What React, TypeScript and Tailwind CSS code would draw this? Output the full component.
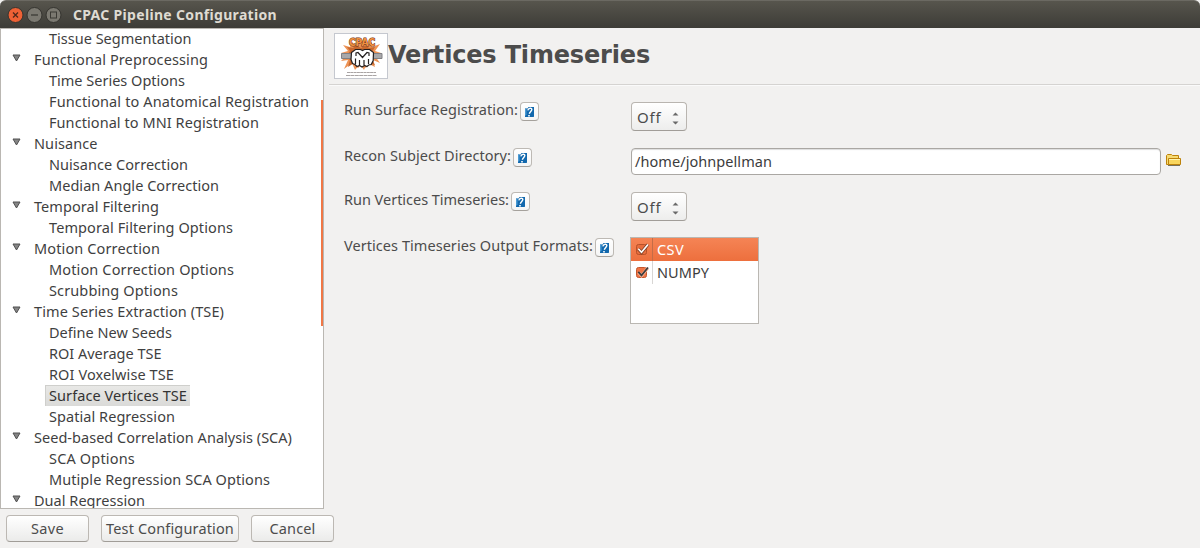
import { useLayoutEffect, useRef } from "react";

/* Text run whose tracking is adjusted so that it fills a given width. */
function Fit({ w, children }: { w: number; children: string }) {
  const ref = useRef<HTMLSpanElement>(null);
  useLayoutEffect(() => {
    const el = ref.current;
    if (!el) return;
    el.style.letterSpacing = "0px";
    const natural = el.getBoundingClientRect().width;
    el.style.letterSpacing = `${(w - natural) / children.length}px`;
  }, [w, children]);
  return (
    <span ref={ref} className="inline-block whitespace-pre">
      {children}
    </span>
  );
}

type Row = { label: string; w: number; group?: boolean; selected?: boolean };

const rows: Row[] = [
  { label: "Tissue Segmentation", w: 142.5 },
  { label: "Functional Preprocessing", w: 174, group: true },
  { label: "Time Series Options", w: 136 },
  { label: "Functional to Anatomical Registration", w: 260 },
  { label: "Functional to MNI Registration", w: 210 },
  { label: "Nuisance", w: 63.5, group: true },
  { label: "Nuisance Correction", w: 139 },
  { label: "Median Angle Correction", w: 170 },
  { label: "Temporal Filtering", w: 125, group: true },
  { label: "Temporal Filtering Options", w: 184 },
  { label: "Motion Correction", w: 126, group: true },
  { label: "Motion Correction Options", w: 185 },
  { label: "Scrubbing Options", w: 129 },
  { label: "Time Series Extraction (TSE)", w: 190, group: true },
  { label: "Define New Seeds", w: 123 },
  { label: "ROI Average TSE", w: 112.5 },
  { label: "ROI Voxelwise TSE", w: 125 },
  { label: "Surface Vertices TSE", w: 138, selected: true },
  { label: "Spatial Regression", w: 126 },
  { label: "Seed-based Correlation Analysis (SCA)", w: 258, group: true },
  { label: "SCA Options", w: 86 },
  { label: "Mutiple Regression SCA Options", w: 221 },
  { label: "Dual Regression", w: 111, group: true },
];

function TreeRow({ row }: { row: Row }) {
  if (row.group) {
    return (
      <div className="flex h-[21px] shrink-0 items-center pl-[11px]">
        <svg width="9" height="8" viewBox="0 0 9 8" className="mr-[13px] mb-[3px] shrink-0">
          <path d="M1 1h7L4.500 7z" fill="#858585" stroke="#505050" />
        </svg>
        <Fit w={row.w}>{row.label}</Fit>
      </div>
    );
  }
  return (
    <div className="flex h-[21px] shrink-0 pl-[44px]">
      <div
        className={
          row.selected
            ? "flex h-[21px] w-[145px] items-center border-t border-l border-[#cfcfcc] bg-linear-to-b from-[#e8e8e6] to-[#dadad8] pl-[3px] text-[#333]"
            : "flex h-[21px] items-center pl-1"
        }
      >
        <Fit w={row.w}>{row.label}</Fit>
      </div>
    </div>
  );
}

function Help() {
  return (
    <button className="flex h-[19px] w-[19px] shrink-0 items-center justify-center rounded-[4px] border border-[#bdb9b4] border-b-[#a5a19c] bg-linear-to-b from-white to-[#f5f5f5]">
      <svg width="11" height="12" viewBox="0 0 11 12">
        <path d="M1 2.500h2.500L4.500 1H10v9.500l-.5 .5H1z" fill="#1268ad" />
        <path d="M1 2.500h1.500v6L1 10z" fill="#4a9ad3" />
        <path d="M3.800 4.400C4.200 2 8.200 1.400 7.800 3.700 7.500 5.300 6 5.500 5.300 7.800" fill="none" stroke="#fff" strokeWidth="1.400" />
        <path d="M4.200 8.900h1.600v1.500H4.200z" fill="#fff" />
      </svg>
    </button>
  );
}

function Label({ text, w }: { text: string; w: number }) {
  return (
    <div className="-mt-px flex w-[286px] shrink-0 items-start">
      <div className="mr-[2px] leading-[18px]">
        <Fit w={w}>{text}</Fit>
      </div>
      <div className="pt-[2px]">
        <Help />
      </div>
    </div>
  );
}

function Choice() {
  return (
    <button className="mt-px ml-px flex h-[29px] w-[56px] items-center rounded-[4px] border border-[#b9b5b0] border-b-[#a19d98] bg-linear-to-b from-white to-[#ededec] pl-[5px] text-[15px] shadow-[inset_0_1px_#fff]">
      <div className="pt-px">
        <Fit w={24.5}>Off</Fit>
      </div>
      <svg width="7" height="13" viewBox="0 0 7 13" className="mt-[3px] ml-[10.5px]">
        <path d="M.5 3.500L3.500 .5 6.500 3.500zM.5 9.500L3.500 12.500 6.500 9.500z" fill="#696969" />
      </svg>
    </button>
  );
}

function Check() {
  return (
    <svg width="15" height="14" viewBox="0 0 15 14" className="shrink-0">
      <rect x="1.500" y="1.500" width="10" height="10" rx="2" fill="#ee7445" stroke="#c4562b" />
      <path d="M3.500 6.500l3 3.200L12.800 2" fill="none" stroke="#f7b79c" strokeWidth="3" />
      <path d="M3.300 5.800l3.200 3.500L13 1.500" fill="none" stroke="#3c3c3c" strokeWidth="1.800" />
    </svg>
  );
}

function CheckSelected() {
  return (
    <svg width="15" height="14" viewBox="0 0 15 14" className="shrink-0">
      <rect x="1.500" y="1.500" width="10" height="10" rx="2" fill="#e76c3c" stroke="#b85128" />
      <path d="M3.300 5.800l3.200 3.500L13 1.500" fill="none" stroke="#7e3e26" strokeWidth="3.200" />
      <path d="M3.300 5.800l3.200 3.500L13 1.500" fill="none" stroke="#fff" strokeWidth="1.700" />
    </svg>
  );
}

function Logo() {
  return (
    <div className="h-[46px] w-[54px] shrink-0 border border-[#c5c8cf] bg-white">
      <svg width="52" height="44" viewBox="0 0 52 44">
        <path
          d="M13 17L8 11l7 2 2-5 5 4 5-6 4 6 6-4 0 5 8-3-5 7 6 2-6 3 5 7-7-3 2 7-8-4-3 7-4-6-5 6-3-7-8 6 4-9-7 1 5-5-5-3z"
          fill="#ed9355"
        />
        <path d="M15 17l-3-4 6 1 3-3 5 3 5-3 3 3 6-1-3 5 4 4-4 3 3 6-7-2-2 5-4-5-4 5-4-5-6 4 2-7-4-3z" fill="#c8672d" />
        <path d="M6.500 19.500h12v5h-12zM36 19.500h11v5H36z" fill="#a8a8aa" stroke="#808084" />
        <path
          d="M16.500 18.500l4-3h5l2 1 2-1h5l4 3-.3 8-2 4-2.500 .5-1.700 1.500-2.500-1-2.500 1.500-2.500-1.500-2.500 1-2-2-2.500-1-1.500-4z"
          fill="#fff"
          stroke="#252020"
          strokeWidth="1.200"
        />
        <path d="M20.500 30v-5.500M24.500 31v-5M29 31v-5M33.500 30v-5M21 22v-3l2-.5 4.500 5 4.500-5 2 .5v3" fill="none" stroke="#252020" strokeWidth="1.200" />
        <text
          x="14"
          y="12"
          textLength="26"
          lengthAdjust="spacingAndGlyphs"
          fontSize="11"
          fontWeight="bold"
          fontFamily="DejaVu Sans"
          fill="#f0913f"
          stroke="#6d331b"
          strokeWidth="1.200"
          paintOrder="stroke"
        >
          CPAC
        </text>
        <path d="M12 38.500h29" stroke="#a9a4a4" strokeWidth="1" strokeDasharray="3 .3" />
        <path d="M11 41.500h31" stroke="#a9a4a4" strokeWidth="1" strokeDasharray="4 .4" />
      </svg>
    </div>
  );
}

const button =
  "flex h-[27px] items-center justify-center rounded-[4px] border border-[#bcb8b3] border-b-[#a19d98] bg-linear-to-b from-white to-[#ebebea] shadow-[inset_0_1px_#fff]";

export default function App() {
  return (
    <div className="flex h-[548px] w-[1200px] flex-col overflow-hidden bg-[#f2f1f0] font-['Noto_Sans',sans-serif] text-[14.5px] text-[#4c4c4c]">
      <header className="flex h-7 shrink-0 items-center rounded-t-[6px] border-t border-[#6b6962] bg-linear-to-b from-[#57554d] to-[#3d3c37] pl-[7px]">
        <svg width="56" height="18" viewBox="0 0 56 18" className="mr-[10px] shrink-0">
          <circle cx="8.500" cy="9" r="7.500" fill="#ee6135" stroke="#35342f" />
          <path d="M6 6.500l5 5M11 6.500l-5 5" stroke="#4f281b" strokeWidth="1.300" />
          <circle cx="27.500" cy="9" r="7.500" fill="#7b7971" stroke="#35342f" />
          <path d="M24 9h7" stroke="#3b3a35" strokeWidth="1.300" />
          <circle cx="46.500" cy="9" r="7.500" fill="#7b7971" stroke="#35342f" />
          <rect x="43.500" y="6" width="6" height="6" fill="none" stroke="#3b3a35" />
        </svg>
        <div className="text-[14px] font-bold text-[#dfdbd2]">
          <Fit w={204}>CPAC Pipeline Configuration</Fit>
        </div>
      </header>
      <div className="flex h-[481px] shrink-0">
        <nav className="relative h-[481px] w-[324px] shrink-0 overflow-hidden border border-[#bab7b2] bg-white">
          <div className="-mt-px flex flex-col text-[#3f3f3f]">
            {rows.map((r) => (
              <TreeRow key={r.label} row={r} />
            ))}
          </div>
          <div className="absolute top-[71px] -right-px h-[226px] w-[3px] bg-[#f07746]" />
        </nav>
        <main className="flex min-w-0 flex-1 flex-col pl-[5px]">
          <div className="flex h-[57px] shrink-0 items-start border-b border-[#d5d3d1] pt-[5px] pl-[5px] shadow-[0_1px_#fafafa]">
            <Logo />
            <h1 className="font-['DejaVu_Sans',sans-serif] text-[24px] leading-[45px] font-bold">
              <Fit w={262}>Vertices Timeseries</Fit>
            </h1>
          </div>
          <div className="flex flex-col pt-4 pl-[15px]">
            <div className="flex h-[46px] items-start">
              <Label text="Run Surface Registration:" w={174} />
              <Choice />
            </div>
            <div className="flex h-11 items-start">
              <Label text="Recon Subject Directory:" w={167} />
              <div className="mt-px ml-px flex h-[27px] w-[530px] items-center rounded-[4px] border border-[#aaa7a3] bg-white pl-[3px] text-[#3c3c3c] shadow-[inset_0_1px_1px_#ddd]">
                <Fit w={137}>/home/johnpellman</Fit>
              </div>
              <svg width="16" height="14" viewBox="0 0 16 14" className="mt-[6px] ml-[4px]">
                <path d="M1.500 11.500v-9l1-1h4l1 1h6v9z" fill="#f6da72" stroke="#bd820b" />
                <path d="M3.500 5.500h12v6h-12z" fill="#f9d65d" stroke="#bd820b" />
                <path d="M4 6.500h11" stroke="#fff4ae" />
                <path d="M3 12.500h12" stroke="#777158" />
              </svg>
            </div>
            <div className="flex h-[46px] items-start">
              <Label text="Run Vertices Timeseries:" w={165} />
              <Choice />
            </div>
            <div className="flex items-start">
              <Label text="Vertices Timeseries Output Formats:" w={249} />
              <div className="flex h-[87px] w-[129px] flex-col border border-[#bab7b2] bg-white">
                <div className="flex h-[23px] items-center bg-linear-to-b from-[#f58455] to-[#ed6f3d] pl-1 text-white">
                  <CheckSelected />
                  <div className="mr-1 ml-[2px] h-full w-px bg-[#c46c47]" />
                  <Fit w={27}>CSV</Fit>
                </div>
                <div className="flex h-[23px] items-center pl-1 text-[#3c3c3c]">
                  <Check />
                  <div className="mr-1 ml-[2px] h-full w-px bg-[#d8d6d4]" />
                  <Fit w={52}>NUMPY</Fit>
                </div>
              </div>
            </div>
          </div>
        </main>
      </div>
      <footer className="flex gap-3 pt-[6px] pl-[6px]">
        <button className={`${button} w-[83px]`}>
          <Fit w={33}>Save</Fit>
        </button>
        <button className={`${button} w-[138px]`}>
          <Fit w={128}>Test Configuration</Fit>
        </button>
        <button className={`${button} w-[83px]`}>
          <Fit w={46}>Cancel</Fit>
        </button>
      </footer>
    </div>
  );
}
